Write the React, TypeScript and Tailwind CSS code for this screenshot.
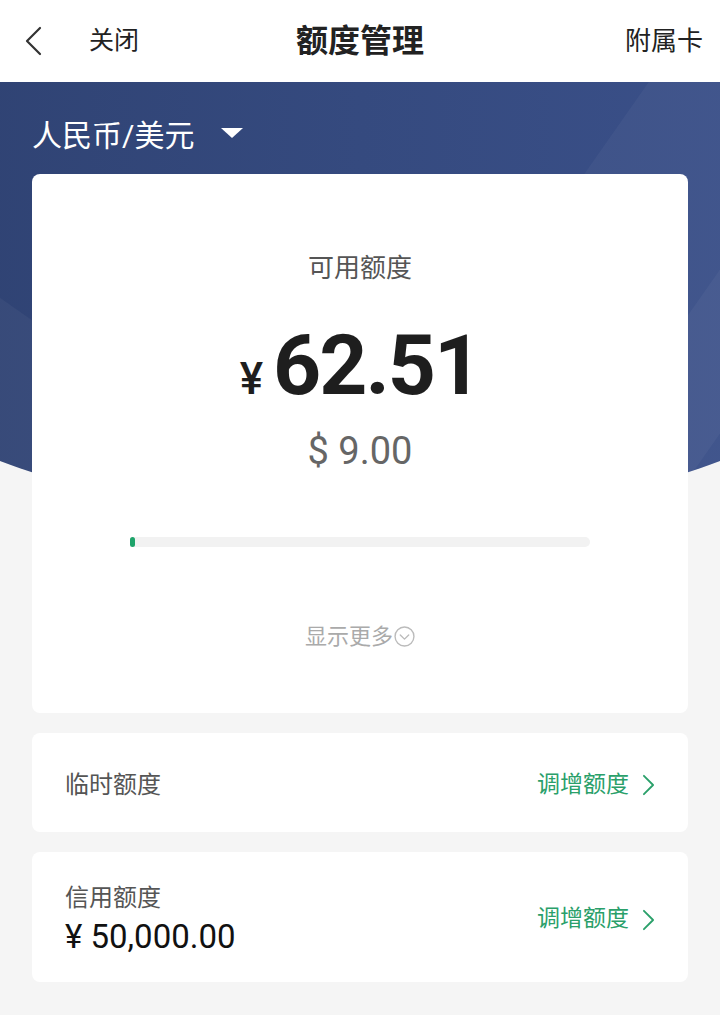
import React from "react";

const font = "font-['Roboto','Noto_Sans_CJK_SC',sans-serif]";

const Chevron = ({ className }: { className?: string }) => (
  <svg viewBox="0 0 14 24" className={className} fill="none" stroke="currentColor" strokeWidth="2" strokeLinecap="round" strokeLinejoin="round">
    <polyline points="2,2 12,12 2,22" />
  </svg>
);

const App = () => {
  return (
    <div className={`min-h-screen w-[720px] bg-[#f5f5f5] ${font}`}>
      {/* header */}
      <div className="grid h-[82px] grid-cols-[1fr_auto_1fr] items-center bg-white px-6 text-[#222]">
        <div className="flex items-center">
          <svg viewBox="0 0 18 30" className="h-[30px] w-[18px]" fill="none" stroke="#333" strokeWidth="2.2" strokeLinecap="round" strokeLinejoin="round">
            <polyline points="16,2 3,15 16,28" />
          </svg>
          <span className="ml-[47px] text-[25px]">关闭</span>
        </div>
        <span className="text-[32px] font-bold">额度管理</span>
        <span className="mr-[-7px] text-right text-[26px]">附属卡</span>
      </div>

      <div className="relative">
        {/* blue background */}
        <div className="absolute inset-x-0 top-0 h-[460px] overflow-hidden">
          <div className="absolute left-[-360px] top-[-498px] h-[940px] w-[1440px] overflow-hidden rounded-[50%] bg-gradient-to-r from-[#2b3d6a] via-[#354a7f] to-[#3f5592]">
            <div className="absolute left-[840px] top-[430px] h-[700px] w-[260px] rotate-[35deg] bg-white/[0.04]" />
            <div className="absolute left-[1030px] top-[470px] h-[700px] w-[400px] rotate-[35deg] bg-white/[0.04]" />
            <div className="absolute left-[150px] top-[720px] h-[500px] w-[280px] rotate-[35deg] bg-white/[0.04]" />
          </div>
        </div>

        <div className="relative px-8">
          <div className="flex h-[92px] items-center pt-[14px] text-white">
            <span className="text-[30px]">人民币/美元</span>
            <span className="ml-[27px] mt-[-4px] h-0 w-0 border-x-[11px] border-t-[10px] border-x-transparent border-t-white" />
          </div>

          {/* main card */}
          <div className="flex h-[539px] flex-col items-center rounded-lg bg-white">
            <div className="mt-[78px] text-[26px] leading-8 text-[#555]">可用额度</div>
            <div className="mt-[40px] flex items-baseline leading-none text-[#1e1e1e]">
              <span className="mr-[10px] text-[44px] font-medium">¥</span>
              <span className="text-[84px] font-bold tracking-[-2px]">62.51</span>
            </div>
            <div className="mt-[24px] text-[38px] leading-none text-[#666]">$ 9.00</div>
            <div className="mt-[67px] h-[10px] w-[460px] rounded-full bg-[#f2f2f2]">
              <div className="h-[10px] w-[5px] rounded-full bg-[#1ea36a]" />
            </div>
            <div className="mt-[73px] flex items-center text-[22px] text-[#aaa]">
              <span>显示更多</span>
              <svg viewBox="0 0 20 20" className="ml-[1px] h-[21px] w-[21px]" fill="none" stroke="#bbb" strokeWidth="1.3" strokeLinecap="round" strokeLinejoin="round">
                <circle cx="10" cy="10" r="9" />
                <polyline points="6,8.5 10,12.5 14,8.5" />
              </svg>
            </div>
          </div>

          {/* temp limit */}
          <div className="mt-5 flex h-[99px] items-center justify-between rounded-lg bg-white px-[33px] pt-[5px]">
            <span className="text-[24px] text-[#555]">临时额度</span>
            <span className="flex items-center text-[23px] text-[#2aa06a]">
              调增额度
              <Chevron className="ml-[13px] h-[22px] w-[13px]" />
            </span>
          </div>

          {/* credit limit */}
          <div className="mt-5 flex h-[130px] items-center justify-between rounded-lg bg-white px-[33px] pt-[5px]">
            <div className="flex flex-col">
              <span className="text-[24px] leading-8 text-[#555]">信用额度</span>
              <span className="mt-[3px] text-[33px] leading-10 text-[#111]">¥ 50,000.00</span>
            </div>
            <span className="flex items-center text-[23px] text-[#2aa06a]">
              调增额度
              <Chevron className="ml-[13px] h-[22px] w-[13px]" />
            </span>
          </div>
        </div>
      </div>
    </div>
  );
};

export default App;
